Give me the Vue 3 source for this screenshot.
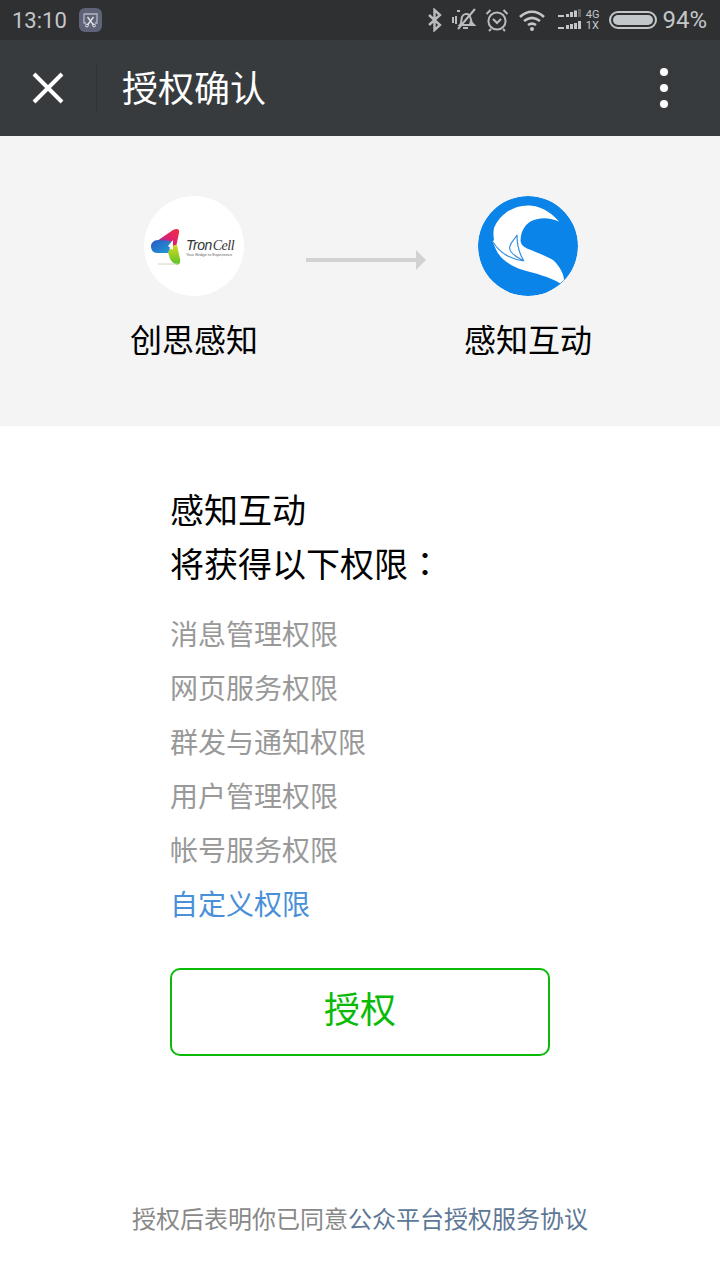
<template>
  <div class="page">
    <div class="status-bar">
      <div class="status-left">
        <span class="time">13:10</span>
        <span class="app-badge">
          <svg width="23" height="24" viewBox="0 0 23 24">
            <rect x="0" y="0" width="23" height="24" rx="6" fill="#5f6377" />
            <path d="M5 6h13v9h-2M5 6v9h2" fill="none" stroke="#b4b7c2" stroke-width="1.300" />
            <path d="M8.500 9l6 8M14.500 9l-6 8" stroke="#e4e5ea" stroke-width="1.300" />
            <circle cx="8" cy="17.500" r="1.400" fill="none" stroke="#e4e5ea" />
            <circle cx="15" cy="17.500" r="1.400" fill="none" stroke="#e4e5ea" />
          </svg>
        </span>
      </div>
      <div class="status-right">
        <svg width="16" height="24" viewBox="0 0 16 24" class="s-bt">
          <path d="M2 7l11 10-5.500 5V2L13 7 2 17" fill="none" stroke="#b9bcbe" stroke-width="2.400" />
        </svg>
        <svg width="26" height="24" viewBox="0 0 26 24" class="s-bell">
          <path d="M8 17c2-2 1-6 2-8 1-3 5-4 7-2 2 2 2 6 3 8l2 2z" fill="none" stroke="#b9bcbe" stroke-width="2" />
          <path d="M18 12l3 5h-4z" fill="#b9bcbe" />
          <path d="M11 20h5M5 3l3 0M1 9v6M4 8v8M23 1L6 21" fill="none" stroke="#b9bcbe" stroke-width="2" />
        </svg>
        <svg width="24" height="24" viewBox="0 0 24 24" class="s-alarm">
          <circle cx="12" cy="13" r="8.600" fill="none" stroke="#b9bcbe" stroke-width="2" />
          <path d="M8 11l4 4 4-4" fill="none" stroke="#b9bcbe" stroke-width="2" />
          <path d="M1.500 6l4-4M22.500 6l-4-4M6 21l-2 2M18 21l2 2" stroke="#b9bcbe" stroke-width="2" />
        </svg>
        <svg width="28" height="24" viewBox="0 0 28 24" class="s-wifi">
          <path d="M2 9c7-7 17-7 24 0M6 13c5-4 11-4 16 0M10 17c3-2 5-2 8 0" fill="none" stroke="#c4c7c9" stroke-width="2.600" />
          <circle cx="14" cy="21" r="2" fill="#c4c7c9" />
        </svg>
        <svg width="26" height="22" viewBox="0 0 26 22" class="s-signal">
          <g fill="#c4c7c9">
            <rect x="1" y="6" width="6" height="2" />
            <rect x="9" y="5" width="3" height="3" />
            <rect x="13" y="3" width="3" height="5" />
            <rect x="17" y="1.500" width="3" height="6.500" />
            <rect x="21" y="0" width="3" height="8" opacity="0.350" />
            <rect x="1" y="18" width="6" height="2" />
            <rect x="9" y="16" width="3" height="4" />
            <rect x="13" y="15" width="3" height="5" />
            <rect x="17" y="14" width="3" height="6" />
            <rect x="21" y="12" width="3" height="8" />
          </g>
        </svg>
        <span class="net"><span>4G</span><span>1X</span></span>
        <span class="battery"><span class="battery-fill"></span></span>
        <span class="percent">94%</span>
      </div>
    </div>

    <div class="nav-bar">
      <button class="close-btn" aria-label="close">
        <svg width="32" height="32" viewBox="0 0 32 32">
          <path d="M2 2l28 28M30 2L2 30" stroke="#fff" stroke-width="4" fill="none" />
        </svg>
      </button>
      <span class="nav-divider"></span>
      <span class="nav-title">授权确认</span>
      <span class="more">
        <i></i><i></i><i></i>
      </span>
    </div>

    <div class="flow">
      <div class="party">
        <div class="logo logo-white">
          <svg width="100" height="100" viewBox="0 0 100 100">
            <defs>
              <linearGradient id="tcTop" x1="0" y1="1" x2="1" y2="0">
                <stop offset="0" stop-color="#5a3fc0" />
                <stop offset="0.5" stop-color="#e0206f" />
                <stop offset="1" stop-color="#f0303a" />
              </linearGradient>
              <linearGradient id="tcBot" x1="0" y1="0" x2="0" y2="1">
                <stop offset="0" stop-color="#d8d820" />
                <stop offset="1" stop-color="#58c428" />
              </linearGradient>
              <linearGradient id="tcLeft" x1="0" y1="0" x2="1" y2="1">
                <stop offset="0" stop-color="#2a58c8" />
                <stop offset="1" stop-color="#1f9fd0" />
              </linearGradient>
            </defs>
            <path d="M13 45L29 34c4-2 7-1 6 3l-3 14h-6z" fill="url(#tcTop)" />
            <path d="M7 50c0-3 3-6 7-6l13 1-2 12H13c-4 0-6-3-6-7z" fill="url(#tcLeft)" />
            <path d="M24 56l6-7h3l3 14c1 5-2 7-5 5-5-3-6-8-7-12z" fill="url(#tcBot)" />
            <path d="M29 44l-5 6 5 4z" fill="#fff" />
            <path d="M14 68h20" stroke="#d6d3c2" stroke-width="1" />
          </svg>
          <span class="tc-name">Tron<em>Cell</em></span>
          <span class="tc-sub">Your Bridge to Experience</span>
        </div>
        <div class="party-name">创思感知</div>
      </div>
      <div class="arrow">
        <span class="arrow-line"></span>
        <span class="arrow-head"></span>
      </div>
      <div class="party">
        <div class="logo">
          <svg width="100" height="100" viewBox="0 0 100 100">
            <circle cx="50" cy="50" r="50" fill="#0a84e8" />
            <path d="M81.300 25.700C75 19 67 11 52 9.500 36 8.500 22 18 16 32c-1 5-.5 9 0 12l-1.300 1.700C17 52 20 59 26 64c6 5 12 8 19 10 11 3 27 7 37 13.300l4-3.300c0-6-5-15-11-20-7-4-17-8-26-11.500-5-2.500-7-5.500-6.300-9.500 0-7 4.300-14 9.300-17.300 8-4.700 20-4.700 29.300 0z" fill="#fff" />
            <path d="M15 46C21 56 32 63 46 65M46 65C38 61 30 55 32 50 33 46 37 43 39 39 39 46 40 56 46 65" fill="none" stroke="#3a8fdc" stroke-width="1.200" />
          </svg>
        </div>
        <div class="party-name">感知互动</div>
      </div>
    </div>

    <div class="content">
      <div class="grant-title">感知互动</div>
      <div class="grant-title">将获得以下权限<span class="colon">：</span></div>
      <ul class="scopes">
        <li v-for="item in scopes" :key="item">{{ item }}</li>
        <li class="custom">自定义权限</li>
      </ul>
      <button class="auth-btn">授权</button>
    </div>

    <div class="footer">授权后表明你已同意<span class="agreement">公众平台授权服务协议</span></div>
  </div>
</template>

<script setup>
const scopes = ['消息管理权限', '网页服务权限', '群发与通知权限', '用户管理权限', '帐号服务权限']
</script>

<style>
html,
body {
  margin: 0;
  background: #fff;
}
</style>

<style scoped>
.page {
  width: 720px;
  height: 1280px;
  display: flex;
  flex-direction: column;
  overflow: hidden;
  background: #fff;
  font-family: "Roboto", "Noto Sans CJK SC", sans-serif;
}
.status-bar {
  height: 40px;
  flex: none;
  background: #2e3032;
  display: flex;
  align-items: center;
  justify-content: space-between;
  padding: 0 13px 0 12px;
  box-sizing: border-box;
  color: #c4c7c9;
}
.status-left {
  display: flex;
  align-items: center;
  gap: 12px;
}
.time {
  font-size: 22px;
}
.app-badge {
  display: flex;
}
.status-right {
  display: flex;
  align-items: center;
}
.s-bt {
  margin-right: 9px;
}
.s-bell {
  margin-right: 7px;
}
.s-alarm {
  margin-right: 9px;
}
.s-wifi {
  margin-right: 11px;
}
.net {
  display: flex;
  flex-direction: column;
  font-size: 11px;
  line-height: 11px;
  margin: 0 10px 0 3px;
}
.battery {
  width: 48px;
  height: 18px;
  border: 2px solid #c4c7c9;
  border-radius: 9px;
  box-sizing: border-box;
  padding: 2px;
  display: flex;
  margin-right: 5px;
}
.battery-fill {
  flex: 1;
  background: #c4c7c9;
  border-radius: 6px;
}
.percent {
  font-size: 24px;
}
.nav-bar {
  height: 96px;
  flex: none;
  background: #383b3e;
  display: flex;
  align-items: center;
}
.close-btn {
  width: 96px;
  height: 96px;
  padding: 0;
  border: 0;
  background: none;
  display: flex;
  align-items: center;
  justify-content: center;
}
.nav-divider {
  width: 1px;
  height: 48px;
  background: #303336;
}
.nav-title {
  margin-left: 25px;
  padding-bottom: 4px;
  font-size: 36px;
  color: #fff;
  flex: 1;
}
.more {
  width: 112px;
  display: flex;
  flex-direction: column;
  align-items: center;
  gap: 8px;
}
.more i {
  width: 8px;
  height: 8px;
  border-radius: 50%;
  background: #fff;
}
.flow {
  height: 290px;
  flex: none;
  box-sizing: border-box;
  padding: 60px 128px 0 130px;
  background: #f4f4f4;
  display: flex;
  justify-content: space-between;
}
.party {
  width: 128px;
  display: flex;
  flex-direction: column;
  align-items: center;
}
.logo {
  position: relative;
  width: 100px;
  height: 100px;
  border-radius: 50%;
  overflow: hidden;
}
.logo svg {
  display: block;
}
.logo-white {
  background: #fff;
}
.tc-name {
  position: absolute;
  left: 42px;
  top: 42px;
  font-family: "Liberation Sans", sans-serif;
  font-size: 14px;
  line-height: 15px;
  letter-spacing: -0.5px;
  font-style: italic;
  color: #333;
  white-space: nowrap;
}
.tc-name em {
  font-family: "Liberation Serif", serif;
  margin-left: 1px;
}
.tc-sub {
  position: absolute;
  left: 42px;
  top: 56px;
  font-family: "Liberation Sans", sans-serif;
  font-size: 4px;
  line-height: 5px;
  color: #666;
  white-space: nowrap;
}
.party-name {
  margin-top: 26px;
  font-size: 32px;
  line-height: 38px;
  color: #000;
}
.arrow {
  width: 120px;
  margin: 54px 0 0 10px;
  height: 20px;
  display: flex;
  align-items: center;
}
.arrow-line {
  flex: 1;
  height: 4px;
  background: #d2d2d2;
}
.arrow-head {
  border-left: 10px solid #d2d2d2;
  border-top: 10px solid transparent;
  border-bottom: 10px solid transparent;
}
.content {
  width: 380px;
  margin: 58px auto 0;
}
.grant-title {
  font-size: 34px;
  line-height: 54px;
  color: #000;
}
.colon {
  font-family: "Noto Sans CJK TC", sans-serif;
  line-height: 0;
}
.scopes {
  list-style: none;
  margin: 17px 0 0;
  padding: 0;
  font-size: 28px;
  line-height: 54px;
  color: #999;
}
.custom {
  color: #4a90d9;
}
.auth-btn {
  display: block;
  width: 100%;
  height: 88px;
  margin-top: 35px;
  padding: 0 0 11px;
  background: #fff;
  border: 2px solid #09bb07;
  border-radius: 10px;
  font-family: inherit;
  font-size: 36px;
  color: #09bb07;
}
.footer {
  margin-top: auto;
  padding-bottom: 43px;
  text-align: center;
  font-size: 24px;
  line-height: 34px;
  color: #888;
}
.agreement {
  color: #5d7896;
}
</style>
